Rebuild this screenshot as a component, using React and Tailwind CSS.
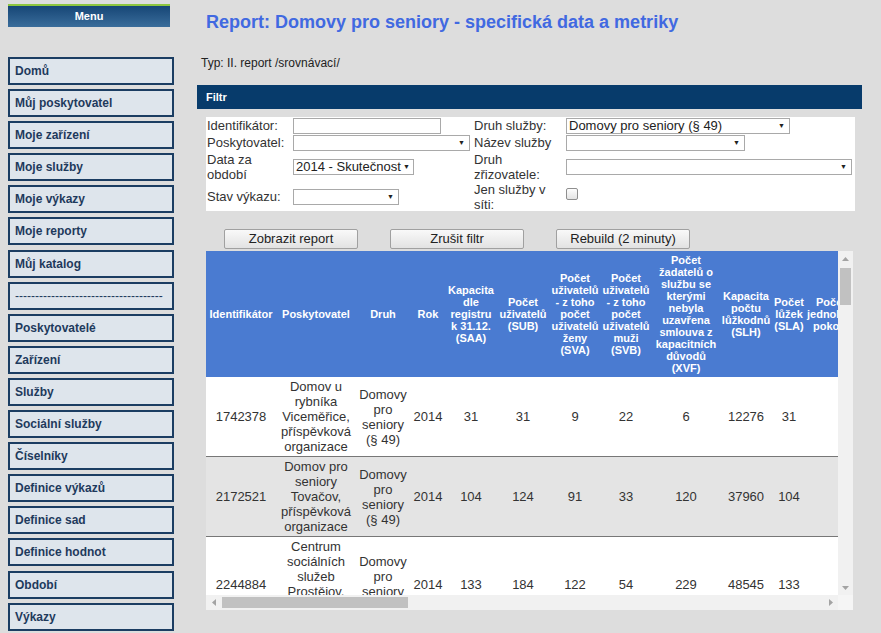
import React from "react";

const menuItems = [
  "Domů",
  "Můj poskytovatel",
  "Moje zařízení",
  "Moje služby",
  "Moje výkazy",
  "Moje reporty",
  "Můj katalog",
  "-------------------------------------",
  "Poskytovatelé",
  "Zařízení",
  "Služby",
  "Sociální služby",
  "Číselníky",
  "Definice výkazů",
  "Definice sad",
  "Definice hodnot",
  "Období",
  "Výkazy",
];

const columns = [
  { label: "Identifikátor", w: 70 },
  { label: "Poskytovatel", w: 80 },
  { label: "Druh", w: 54 },
  { label: "Rok", w: 36 },
  { label: "Kapacita dle registru k 31.12. (SAA)", w: 50 },
  { label: "Počet uživatelů (SUB)", w: 54 },
  { label: "Počet uživatelů - z toho počet uživatelů ženy (SVA)", w: 50 },
  { label: "Počet uživatelů - z toho počet uživatelů muži (SVB)", w: 52 },
  {
    label:
      "Počet žadatelů o službu se kterými nebyla uzavřena smlouva z kapacitních důvodů (XVF)",
    w: 68,
  },
  { label: "Kapacita počtu lůžkodnů (SLH)", w: 52 },
  { label: "Počet lůžek (SLA)", w: 34 },
  { label: "Počet jednolůžkových pokojů", w: 50 },
];

const tableWidth = columns.reduce((s, c) => s + c.w, 0);

const rows = [
  [
    "1742378",
    "Domov u rybníka Viceměřice, příspěvková organizace",
    "Domovy pro seniory (§ 49)",
    "2014",
    "31",
    "31",
    "9",
    "22",
    "6",
    "12276",
    "31",
    "",
  ],
  [
    "2172521",
    "Domov pro seniory Tovačov, příspěvková organizace",
    "Domovy pro seniory (§ 49)",
    "2014",
    "104",
    "124",
    "91",
    "33",
    "120",
    "37960",
    "104",
    "",
  ],
  [
    "2244884",
    "Centrum sociálních služeb Prostějov, příspěvková organizace",
    "Domovy pro seniory (§ 49)",
    "2014",
    "133",
    "184",
    "122",
    "54",
    "229",
    "48545",
    "133",
    "",
  ],
];

function FakeSelect({ value, className }) {
  return (
    <div
      className={`flex h-[16px] items-center justify-between whitespace-nowrap border border-[#a9a9a9] bg-white pl-[2px] pr-[4px] text-[13px] leading-[14px] text-[#222] ${className}`}
    >
      <span>{value}</span>
      <span className="text-[7px] leading-none">▼</span>
    </div>
  );
}

function Arrow({ dir }) {
  const pts = {
    up: "0,4 3.5,0 7,4",
    down: "0,0 7,0 3.5,4",
    left: "4,0 4,7 0,3.5",
    right: "0,0 0,7 4,3.5",
  }[dir];
  const vertical = dir === "up" || dir === "down";
  return (
    <svg
      width={vertical ? 7 : 4}
      height={vertical ? 4 : 7}
      viewBox={vertical ? "0 0 7 4" : "0 0 4 7"}
    >
      <polygon points={pts} fill="#a3a3a3" />
    </svg>
  );
}

export default function App() {
  return (
    <div className="flex h-screen overflow-hidden bg-[#dddddd] font-['Liberation_Sans',Arial,sans-serif]">
      {/* Sidebar */}
      <aside className="ml-[8px] w-[166px] shrink-0 pt-[4px]">
        <div className="flex h-[23px] w-[162px] items-center justify-center border-t-2 border-[#8dc63f] bg-gradient-to-b from-[#164676] to-[#3a6d9b] text-[11px] font-bold text-white">
          Menu
        </div>
        <nav className="mt-[30px] flex flex-col gap-[4.1px]">
          {menuItems.map((item) => (
            <div
              key={item}
              className="flex h-[28px] items-center border-2 border-[#1b3d62] bg-[#dee5ec] pl-[5px] text-[12px] font-bold text-[#1e3a5c]"
            >
              {item.startsWith("---") ? (
                <span className="font-normal">{item}</span>
              ) : (
                item
              )}
            </div>
          ))}
        </nav>
      </aside>

      {/* Main */}
      <main className="ml-[23px] w-[665px] shrink-0">
        <h1 className="pl-[9px] pt-[11px] text-[18px] font-bold leading-[22px] text-[#4169e1]">
          Report: Domovy pro seniory - specifická data a metriky
        </h1>
        <p className="mt-[23px] pl-[4px] text-[12px] leading-[14px] text-[#222]">
          Typ: II. report /srovnávací/
        </p>

        {/* Filtr */}
        <div className="mt-[15px] flex h-[24px] items-center bg-[#073b6b] pl-[9px] text-[11px] font-bold text-white">
          Filtr
        </div>
        <div className="ml-[9px] mt-[8px] grid h-[94px] w-[649px] grid-cols-[86px_181px_92px_1fr] grid-rows-[17px_17px_31px_29px] items-center bg-white pl-[1px] text-[13px] leading-[15px] text-[#333]">
          <span>Identifikátor:</span>
          <div className="h-[16px] w-[148px] border border-[#a9a9a9] bg-white" />
          <span>Druh služby:</span>
          <FakeSelect value="Domovy pro seniory (§ 49)" className="w-[224px]" />

          <span>Poskytovatel:</span>
          <FakeSelect value="" className="w-[177px]" />
          <span>Název služby</span>
          <FakeSelect value="" className="w-[179px]" />

          <span>
            Data za
            <br />
            období
          </span>
          <FakeSelect value="2014 - Skutečnost" className="w-[121px] !pr-[3px]" />
          <span>
            Druh
            <br />
            zřizovatele:
          </span>
          <FakeSelect value="" className="w-[286px]" />

          <span>Stav výkazu:</span>
          <FakeSelect value="" className="w-[106px]" />
          <span>
            Jen služby v
            <br />
            síti:
          </span>
          <div className="mb-[5px] h-[12px] w-[12px] rounded-[2px] border border-[#8f8f8f] bg-gradient-to-b from-[#fdfdfd] to-[#e4e4e4]" />
        </div>

        {/* Buttons */}
        <div className="mt-[18px] flex gap-[32px] pl-[27px]">
          {["Zobrazit report", "Zrušit filtr", "Rebuild (2 minuty)"].map((b) => (
            <button
              key={b}
              className="h-[20px] w-[134px] rounded-[2px] border border-[#a0a0a0] bg-gradient-to-b from-[#f9f9f9] to-[#e2e2e2] text-[13px] leading-[16px] text-[#222]"
            >
              {b}
            </button>
          ))}
        </div>

        {/* Table with scrollbars */}
        <div className="ml-[9px] mt-[2px] w-[647px]">
          <div className="flex h-[344px]">
            <div className="w-[632px] overflow-hidden bg-white">
              <table
                className="table-fixed border-collapse"
                style={{ width: tableWidth }}
              >
                <colgroup>
                  {columns.map((c) => (
                    <col key={c.label} style={{ width: c.w }} />
                  ))}
                </colgroup>
                <thead>
                  <tr className="bg-[#4a7bd1]">
                    {columns.map((c) => (
                      <th
                        key={c.label}
                        className="px-[1px] py-[3px] text-center align-middle text-[11px] font-bold leading-[12px] text-white"
                      >
                        {c.label}
                      </th>
                    ))}
                  </tr>
                </thead>
                <tbody>
                  {rows.map((r, i) => (
                    <tr
                      key={r[0]}
                      className={`border-b border-[#777] ${
                        i % 2 === 1 ? "bg-[#e4e4e4]" : "bg-white"
                      }`}
                    >
                      {r.map((v, j) => (
                        <td
                          key={j}
                          className="px-[1px] py-[2px] text-center align-middle text-[13px] leading-[15px] text-[#333]"
                        >
                          {v}
                        </td>
                      ))}
                    </tr>
                  ))}
                </tbody>
              </table>
            </div>
            {/* vertical scrollbar */}
            <div className="flex w-[15px] flex-col items-center bg-[#f1f1f1]">
              <div className="flex h-[15px] items-center justify-center">
                <Arrow dir="up" />
              </div>
              <div className="mt-[2px] h-[37px] w-[11px] bg-[#c1c1c1]" />
              <div className="flex-1" />
              <div className="flex h-[15px] items-center justify-center">
                <Arrow dir="down" />
              </div>
            </div>
          </div>
          <div className="flex h-[15px]">
            <div className="flex w-[632px] items-center bg-[#f1f1f1]">
              <div className="flex w-[15px] items-center justify-center">
                <Arrow dir="left" />
              </div>
              <div className="ml-[1px] h-[11px] w-[186px] bg-[#c1c1c1]" />
              <div className="flex-1" />
              <div className="flex w-[15px] items-center justify-center">
                <Arrow dir="right" />
              </div>
            </div>
            <div className="w-[15px] bg-[#f5f5f5]" />
          </div>
        </div>
      </main>
    </div>
  );
}
